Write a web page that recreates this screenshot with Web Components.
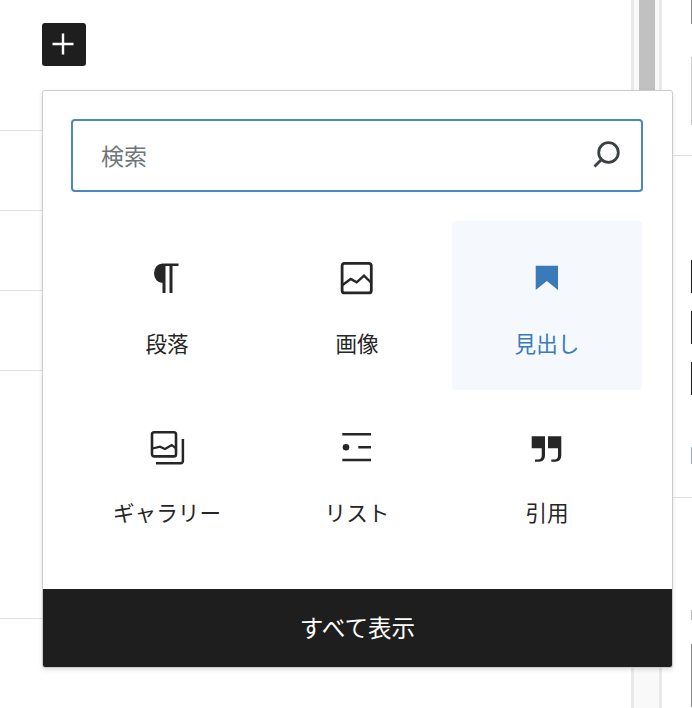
<!DOCTYPE html>
<html lang="ja">
<head>
<meta charset="utf-8">
<title>Block inserter</title>
<style>
    html, body { margin: 0; padding: 0; background: #fff; }
    body { width: 692px; height: 708px; overflow: hidden; font-family: "Noto Sans CJK JP", "Noto Sans", sans-serif; }
</style>
</head>
<body>
<editor-page>
    <inserter-popover>
        <search-box placeholder="検索" slot="search"></search-box>
        <block-item label="段落" icon="paragraph"></block-item>
        <block-item label="画像" icon="image"></block-item>
        <block-item label="見出し" icon="heading" active></block-item>
        <block-item label="ギャラリー" icon="gallery"></block-item>
        <block-item label="リスト" icon="list"></block-item>
        <block-item label="引用" icon="quote"></block-item>
        <span slot="footer">すべて表示</span>
    </inserter-popover>
</editor-page>

<script>
// all block icons are drawn on the same 40x40 box
const ICONS = {
    paragraph: '<path d="M15.500 5.500H31.500V8H25.500V35H22.500V8H18.500V35H15.500V25A8.500 9.750 0 0 1 15.500 5.500z" fill="currentColor"/>',
    image: '<rect x="5.100" y="5.400" width="29.200" height="29.500" rx="2.500" fill="none" stroke="currentColor" stroke-width="2.800"/><path d="M5.500 27L13.700 21 19.700 24.300 27 17.700 34.500 25" fill="none" stroke="currentColor" stroke-width="2.400"/>',
    heading: '<path d="M8.700 7.700H31V32L19.850 23 8.700 32z" fill="currentColor"/>',
    gallery: '<rect x="5" y="5.300" width="24" height="24.100" rx="2.200" fill="none" stroke="currentColor" stroke-width="2.600"/><path d="M5.500 21.500L13 19.700 18 22 24.700 18 29 21.300" fill="none" stroke="currentColor" stroke-width="2.200"/><path d="M35.900 12V34a2.200 2.200 0 0 1-2.200 2.200H9" fill="none" stroke="currentColor" stroke-width="2.500"/>',
    list: '<path d="M5.300 7.300H34M21.300 20.300H34M5.300 33H34" fill="none" stroke="currentColor" stroke-width="2.500"/><circle cx="9" cy="20.300" r="3.300" fill="currentColor"/>',
    quote: '<path d="M4.700 9.300H18V28c0 4.500-2.200 6.700-6 6.700H8V32.500h3c2.500 0 3.700-1.500 3.700-4V21.300H4.700z" fill="currentColor"/><path d="M21 9.300H34.300V28c0 4.500-2.200 6.700-6 6.700H24.300V32.500h3c2.500 0 3.700-1.500 3.700-4V21.300H21z" fill="currentColor"/>'
};

class EditorPage extends HTMLElement {
    constructor() {
        super();
        this.attachShadow({ mode: 'open' });
        this.shadowRoot.innerHTML = `
            <style>
                :host {
                    display: grid;
                    grid-template-columns: 631px 31px 30px;
                    position: relative;
                    width: 692px;
                    height: 708px;
                    overflow: hidden;
                    background: #fff;
                }
                .content { padding-top: 23px; }
                .add {
                    display: flex;
                    align-items: center;
                    justify-content: center;
                    width: 44px;
                    height: 43px;
                    margin-left: 42px;
                    margin-bottom: 64px;
                    background: #1e1e1e;
                    border-radius: 3px;
                    color: #fff;
                }
                .add svg { margin-right: 2px; margin-bottom: 1px; }
                .row { height: 79px; border-bottom: 1px solid #e0e0e0; }
                .row.first { height: 0; }
                .row.tall { height: 247px; }
                .track {
                    box-sizing: border-box;
                    background: #f9f9f9;
                    border-left: 3px solid #e9e9e9;
                    border-right: 3px solid #e9e9e9;
                    padding: 0 4px 0 5px;
                }
                .thumb { height: 120px; background: #c1c1c1; }
                .side { display: flex; flex-direction: column; align-items: flex-end; }
                .tick { width: 1px; flex: none; }
                .line { align-self: stretch; flex: none; height: 1px; background: #e0e0e0; }
            </style>
            <div class="content">
                <div class="add">
                    <svg width="24" height="24" viewBox="0 0 24 24"><path d="M10.800 1.500h2.400v9.300h9.300v2.400h-9.300v9.300h-2.400v-9.300H1.500v-2.400h9.300z" fill="currentColor"/></svg>
                </div>
                <div class="row first"></div>
                <div class="row"></div>
                <div class="row"></div>
                <div class="row"></div>
                <div class="row tall"></div>
            </div>
            <div class="track"><div class="thumb"></div></div>
            <div class="side">
                <div class="tick" style="height:24px;background:#888"></div>
                <div class="tick" style="height:68px;margin-top:33px;background:#ccc"></div>
                <div class="line" style="margin-top:30px"></div>
                <div class="tick" style="height:33px;margin-top:104px;background:#1e1e1e"></div>
                <div class="tick" style="height:33px;margin-top:18px;background:#1e1e1e"></div>
                <div class="tick" style="height:33px;margin-top:18px;background:#1e1e1e"></div>
                <div class="tick" style="height:17px;margin-top:52px;background:#8fb3d3"></div>
                <div class="line" style="margin-top:33px"></div>
                <div class="tick" style="height:10px;margin-top:112px;background:#bbb"></div>
                <div class="tick" style="height:63px;margin-top:24px;background:#888"></div>
            </div>
            <slot></slot>
        `;
    }
}
customElements.define('editor-page', EditorPage);

class InserterPopover extends HTMLElement {
    constructor() {
        super();
        this.attachShadow({ mode: 'open' });
        this.shadowRoot.innerHTML = `
            <style>
                :host {
                    display: flex;
                    flex-direction: column;
                    position: absolute;
                    left: 42px;
                    top: 90px;
                    box-sizing: border-box;
                    width: 631px;
                    height: 578px;
                    background: #fff;
                    border: 1px solid #ccc;
                    border-radius: 3px;
                    box-shadow: 0 2px 4px rgba(0,0,0,0.12);
                    overflow: hidden;
                }
                .body { flex: 1; padding: 28px 29px 0 28px; }
                .grid {
                    display: grid;
                    grid-template-columns: repeat(3, 190px);
                    grid-auto-rows: 169px;
                    margin: 29px 0 0 1px;
                }
                .footer {
                    display: flex;
                    align-items: center;
                    justify-content: center;
                    box-sizing: border-box;
                    height: 78px;
                    flex: none;
                    background: #1e1e1e;
                    color: #fff;
                    font-size: 23.6px;
                    padding-bottom: 3px;
                }
            </style>
            <div class="body">
                <slot name="search"></slot>
                <div class="grid"><slot></slot></div>
            </div>
            <div class="footer"><slot name="footer"></slot></div>
        `;
    }
}
customElements.define('inserter-popover', InserterPopover);

class SearchBox extends HTMLElement {
    constructor() {
        super();
        this.attachShadow({ mode: 'open' });
        this.shadowRoot.innerHTML = `
            <style>
                :host {
                    display: flex;
                    align-items: center;
                    justify-content: space-between;
                    box-sizing: border-box;
                    width: 572px;
                    height: 73px;
                    padding: 0 19px 0 28px;
                    border: 2px solid #4a88bd;
                    border-radius: 4px;
                    color: #70757a;
                    font-size: 23px;
                }
                span { margin-bottom: 2px; }
                svg { color: #3c4043; display: block; margin-bottom: 1px; }
            </style>
            <span>${this.getAttribute('placeholder') || ''}</span>
            <svg width="30" height="30" viewBox="0 0 30 30"><circle cx="16.500" cy="12.500" r="9.800" fill="none" stroke="currentColor" stroke-width="2.800"/><path d="M9.500 19.500L2.500 26.500" fill="none" stroke="currentColor" stroke-width="2.800"/></svg>
        `;
    }
}
customElements.define('search-box', SearchBox);

class BlockItem extends HTMLElement {
    constructor() {
        super();
        this.attachShadow({ mode: 'open' });
        this.shadowRoot.innerHTML = `
            <style>
                :host {
                    display: flex;
                    flex-direction: column;
                    align-items: center;
                    color: #262626;
                    border-radius: 4px;
                    font-size: 21.6px;
                }
                :host([active]) { background: #f5f9fd; color: #3a7ab8; }
                .icon { height: 40px; margin-top: 37px; }
                svg { display: block; }
                .label { margin-top: 29px; line-height: 32px; }
            </style>
            <div class="icon"><svg width="40" height="40" viewBox="0 0 40 40">${ICONS[this.getAttribute('icon')]}</svg></div>
            <div class="label">${this.getAttribute('label')}</div>
        `;
    }
}
customElements.define('block-item', BlockItem);
</script>
</body>
</html>
